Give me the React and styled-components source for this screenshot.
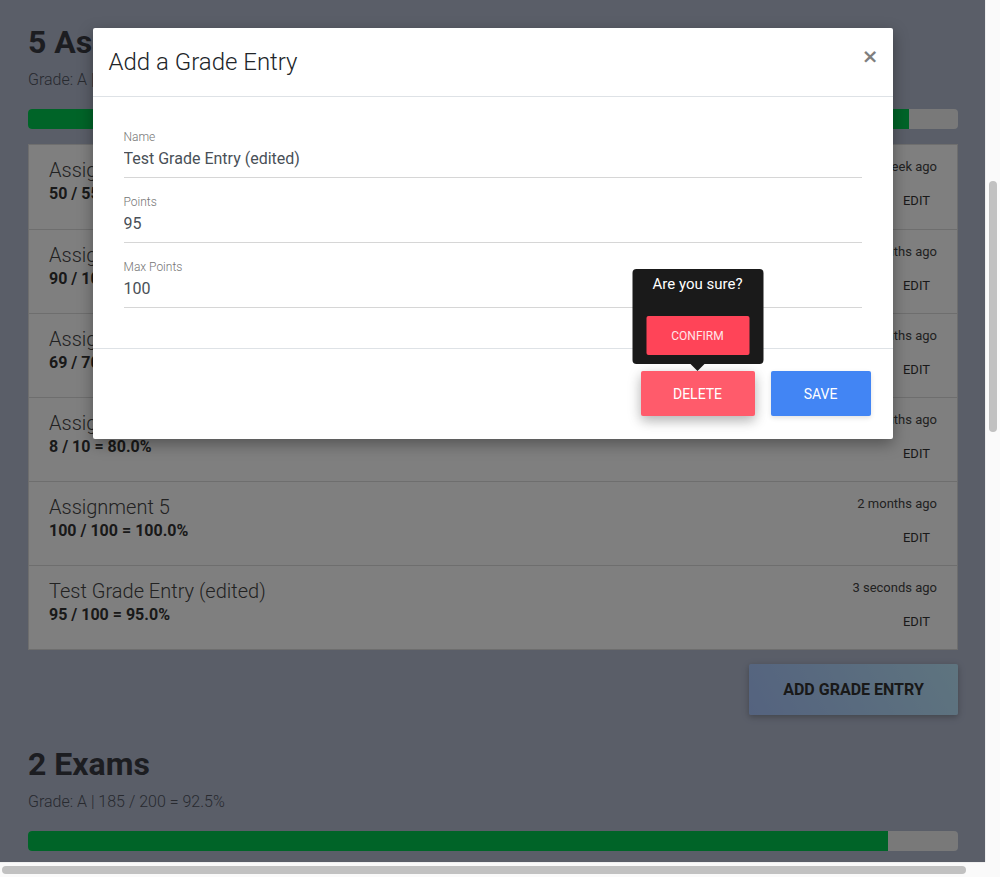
import { useLayoutEffect, useRef } from "react";
import styled, { createGlobalStyle } from "styled-components";

const GlobalStyle = createGlobalStyle`
    html, body {
        margin: 0;
        padding: 0;
        height: 100%;
        overflow: hidden;
        background: #fafafa;
        font-family: Roboto, "Noto Sans", Arial, sans-serif;
    }
`;

const assignments = [
    { name: "Assignment 1", points: 50, max: 55, when: "a week ago" },
    { name: "Assignment 2", points: 90, max: 100, when: "2 months ago" },
    { name: "Assignment 3", points: 69, max: 70, when: "2 months ago" },
    { name: "Assignment 4", points: 8, max: 10, when: "2 months ago" },
    { name: "Assignment 5", points: 100, max: 100, when: "2 months ago" },
    { name: "Test Grade Entry (edited)", points: 95, max: 100, when: "3 seconds ago" },
];

const exams = [
    { name: "Midterm", points: 92, max: 100, when: "a month ago" },
    { name: "Final", points: 93, max: 100, when: "3 weeks ago" },
];

// browser frame: viewport + scrollbars
const Frame = styled.div`
    display: grid;
    grid-template-columns: 985px 15px;
    grid-template-rows: 862px 15px;
    width: 1000px;
    height: 877px;
`;

const Viewport = styled.div`
    position: relative;
    overflow: hidden;
`;

const Scroller = styled.div`
    height: 100%;
    overflow: hidden;
    background: #b4bcd1;
`;

const VTrack = styled.div`
    background: #fafafa;
    border-left: 1px solid #efefef;
    padding: 181px 0 0 3px;
`;

const VThumb = styled.div`
    width: 8px;
    height: 251px;
    border-radius: 4px;
    background: #c1c1c1;
`;

const HTrack = styled.div`
    background: #fafafa;
    border-top: 1px solid #efefef;
    padding: 3px 0 0 2px;
`;

const HThumb = styled.div`
    width: 964px;
    height: 8px;
    border-radius: 4px;
    background: #c1c1c1;
`;

const Corner = styled.div`
    background: #fafafa;
`;

const Page = styled.div`
    width: 1006px;
    min-height: 2960px;
    box-sizing: border-box;
    padding: 0 48px 0 28px;
`;

const Navbar = styled.nav`
    height: 56px;
    display: flex;
    align-items: center;
    color: #333;
    font-size: 20px;
    font-weight: 500;
`;

const CourseHeader = styled.header`
    min-height: 540px;
    padding-top: 24px;
    color: #333;

    h1 {
        margin: 0 0 12px;
        font-size: 40px;
    }
    p {
        margin: 0;
        font-size: 16px;
        font-weight: 300;
    }
`;

const Section = styled.section`
    padding-bottom: 30px;
`;

const SectionTitle = styled.h2`
    margin: 0;
    font-size: 32px;
    line-height: 38px;
    font-weight: 700;
    color: #393b42;
`;

const GradeLine = styled.div`
    margin-top: 9px;
    font-size: 16px;
    line-height: 20px;
    font-weight: 300;
    color: #50545f;
`;

const Progress = styled.div`
    margin-top: 19px;
    height: 20px;
    border-radius: 4px;
    background: #f2f2f2;
    overflow: hidden;
`;

const ProgressFill = styled.div`
    height: 100%;
    background: #00c851;
`;

const Card = styled.div`
    margin-top: 15px;
    background: #fff;
    border: 1px solid #dcdcdc;
`;

const Row = styled.div`
    display: flex;
    justify-content: space-between;
    height: 84px;
    box-sizing: border-box;
    padding: 13px 20px 0;
    & + & {
        border-top: 1px solid #dcdcdc;
    }
`;

const EntryName = styled.div`
    font-size: 20px;
    line-height: 24px;
    font-weight: 300;
    color: #444;
`;

const EntryScore = styled.div`
    margin-top: 2px;
    font-size: 16px;
    line-height: 20px;
    font-weight: 700;
    color: #333;
`;

const RowSide = styled.div`
    display: flex;
    flex-direction: column;
    align-items: flex-end;
`;

const When = styled.div`
    font-size: 13px;
    line-height: 18px;
    color: #444;
`;

const FlatButton = styled.button`
    margin-top: 9px;
    height: 30px;
    padding: 0 7px;
    border: none;
    background: transparent;
    font-family: inherit;
    font-size: 13px;
    color: #333;
    text-transform: uppercase;
`;

const Actions = styled.div`
    display: flex;
    justify-content: flex-end;
    margin-top: 14px;
`;

const GradientButton = styled.button`
    width: 209px;
    height: 51px;
    border: none;
    border-radius: 2px;
    background: linear-gradient(60deg, #a9c6ff, #bde9ff);
    box-shadow: 0 2px 5px rgba(0, 0, 0, 0.16), 0 2px 10px rgba(0, 0, 0, 0.12);
    font-family: inherit;
    font-size: 16px;
    font-weight: 700;
    color: #333;
    text-transform: uppercase;
`;

const Overlay = styled.div`
    position: absolute;
    inset: 0;
    background: rgba(0, 0, 0, 0.5);
    display: flex;
    justify-content: center;
    align-items: flex-start;
    padding-top: 28px;
    box-sizing: border-box;
`;

const Modal = styled.div`
    width: 800px;
    background: #fff;
    border-radius: 2px;
    box-shadow: 0 5px 15px rgba(0, 0, 0, 0.35);
`;

const ModalHeader = styled.div`
    height: 68px;
    display: flex;
    align-items: center;
    justify-content: space-between;
    padding: 0 14px 0 16px;
    border-bottom: 1px solid #dee2e6;
`;

const ModalTitle = styled.h4`
    margin: 0;
    font-size: 24px;
    font-weight: 300;
    color: #212529;
`;

const Close = styled.button`
    border: none;
    background: transparent;
    padding: 0;
    font-family: "DejaVu Sans", Arial, sans-serif;
    font-size: 20px;
    font-weight: 700;
    line-height: 1;
    color: #000;
    opacity: 0.5;
    margin-top: -12px;
`;

const ModalBody = styled.div`
    padding: 32px 31px 40px;
`;

const Field = styled.div`
    & + & {
        margin-top: 16px;
    }
`;

const Label = styled.label`
    display: block;
    font-size: 12px;
    line-height: 16px;
    font-weight: 300;
    color: #757575;
`;

const Input = styled.input`
    display: block;
    width: 100%;
    box-sizing: border-box;
    padding: 4px 0 8px;
    border: none;
    border-bottom: 1px solid #d6d6d6;
    outline: none;
    font-family: inherit;
    font-size: 16px;
    line-height: 20px;
    color: #495057;
`;

const ModalFooter = styled.div`
    display: flex;
    justify-content: flex-end;
    gap: 16px;
    padding: 22px 22px 23px;
    border-top: 1px solid #dee2e6;
`;

const Anchor = styled.div`
    position: relative;
`;

const Button = styled.button`
    width: ${(p) => p.$width}px;
    height: 45px;
    border: none;
    border-radius: 2px;
    background: ${(p) => p.$color};
    box-shadow: ${(p) =>
        p.$raised
            ? "0 5px 11px rgba(0, 0, 0, 0.18), 0 4px 15px rgba(0, 0, 0, 0.15)"
            : "0 2px 5px rgba(0, 0, 0, 0.12)"};
    font-family: inherit;
    font-size: 14px;
    color: #fff;
    text-transform: uppercase;
`;

const Popover = styled.div`
    position: absolute;
    bottom: calc(100% + 7px);
    left: 50%;
    transform: translateX(-50%);
    width: 131px;
    box-sizing: border-box;
    padding: 5px 14px 9px;
    border-radius: 4px;
    background: #1a1a1a;
    color: #fff;
    text-align: center;

    &:after {
        content: "";
        position: absolute;
        top: 100%;
        left: 50%;
        margin-left: -7px;
        border: 7px solid transparent;
        border-top-color: #1a1a1a;
        border-bottom: none;
    }
`;

const PopoverText = styled.div`
    font-size: 15px;
    line-height: 20px;
`;

const ConfirmButton = styled.button`
    display: block;
    width: 100%;
    height: 39px;
    margin-top: 22px;
    border: none;
    border-radius: 2px;
    background: #ff4458;
    font-family: inherit;
    font-size: 12px;
    color: #ffe6ea;
    text-transform: uppercase;
`;

function GradeSection({ title, entries, sectionRef }) {
    const points = entries.reduce((s, e) => s + e.points, 0);
    const max = entries.reduce((s, e) => s + e.max, 0);
    const pct = (points / max) * 100;
    return (
        <Section ref={sectionRef}>
            <SectionTitle>{title}</SectionTitle>
            <GradeLine>
                Grade: A | {points} / {max} = {pct.toFixed(1)}%
            </GradeLine>
            <Progress>
                <ProgressFill style={{ width: `${pct}%` }} />
            </Progress>
            <Card>
                {entries.map((e) => (
                    <Row key={e.name}>
                        <div>
                            <EntryName>{e.name}</EntryName>
                            <EntryScore>
                                {e.points} / {e.max} = {((e.points / e.max) * 100).toFixed(1)}%
                            </EntryScore>
                        </div>
                        <RowSide>
                            <When>{e.when}</When>
                            <FlatButton>Edit</FlatButton>
                        </RowSide>
                    </Row>
                ))}
            </Card>
            <Actions>
                <GradientButton>Add Grade Entry</GradientButton>
            </Actions>
        </Section>
    );
}

export default function App() {
    const scrollerRef = useRef(null);
    const sectionRef = useRef(null);

    useLayoutEffect(() => {
        if (scrollerRef.current && sectionRef.current) {
            const top = sectionRef.current.offsetTop - scrollerRef.current.offsetTop;
            scrollerRef.current.scrollTop = top - 23;
        }
    }, []);

    return (
        <>
            <GlobalStyle />
            <Frame>
                <Viewport>
                    <Scroller ref={scrollerRef}>
                        <Page>
                            <Navbar>Grade Tracker</Navbar>
                            <CourseHeader>
                                <h1>CS 101</h1>
                                <p>Overall grade: A | 597 / 635 = 94.0%</p>
                            </CourseHeader>
                            <GradeSection title="5 Assignments" entries={assignments} sectionRef={sectionRef} />
                            <GradeSection title="2 Exams" entries={exams} />
                        </Page>
                    </Scroller>
                    <Overlay>
                        <Modal>
                            <ModalHeader>
                                <ModalTitle>Add a Grade Entry</ModalTitle>
                                <Close aria-label="Close">×</Close>
                            </ModalHeader>
                            <ModalBody>
                                <Field>
                                    <Label>Name</Label>
                                    <Input defaultValue="Test Grade Entry (edited)" />
                                </Field>
                                <Field>
                                    <Label>Points</Label>
                                    <Input defaultValue="95" />
                                </Field>
                                <Field>
                                    <Label>Max Points</Label>
                                    <Input defaultValue="100" />
                                </Field>
                            </ModalBody>
                            <ModalFooter>
                                <Anchor>
                                    <Popover>
                                        <PopoverText>Are you sure?</PopoverText>
                                        <ConfirmButton>Confirm</ConfirmButton>
                                    </Popover>
                                    <Button $width={114} $color="#ff5b6b" $raised>
                                        Delete
                                    </Button>
                                </Anchor>
                                <Button $width={100} $color="#4285f4">
                                    Save
                                </Button>
                            </ModalFooter>
                        </Modal>
                    </Overlay>
                </Viewport>
                <VTrack>
                    <VThumb />
                </VTrack>
                <HTrack>
                    <HThumb />
                </HTrack>
                <Corner />
            </Frame>
        </>
    );
}
